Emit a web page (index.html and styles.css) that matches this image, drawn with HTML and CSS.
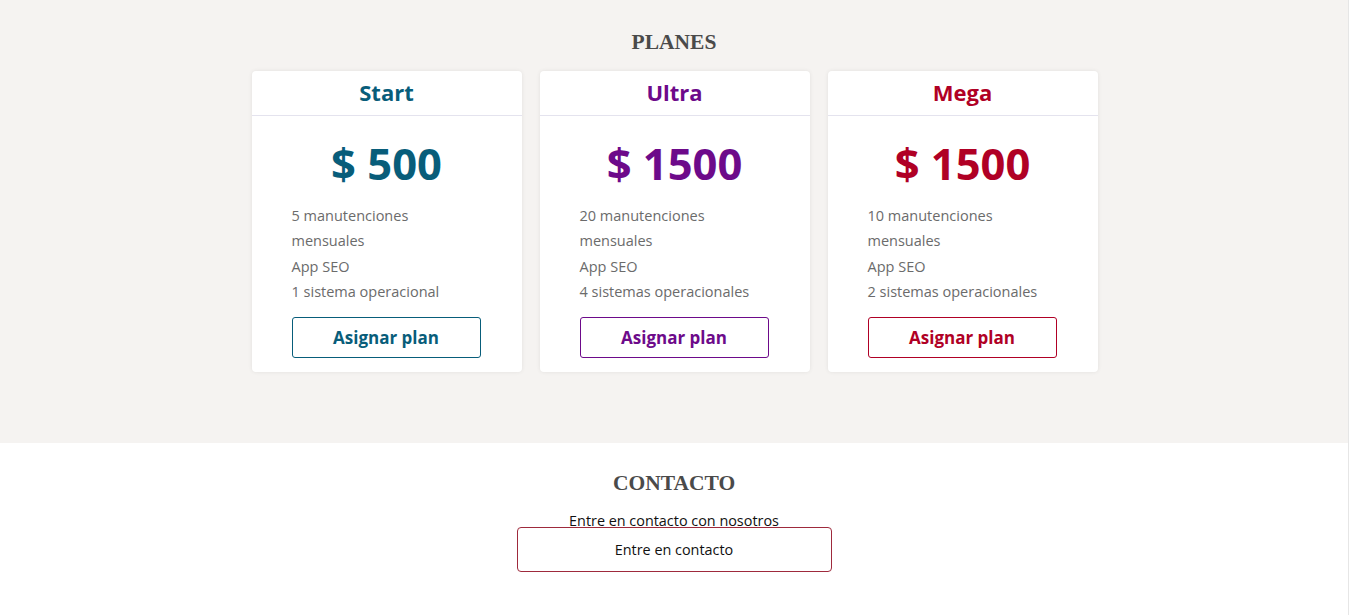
FILE: index.html
```html
<!DOCTYPE html>
<html lang="es">
<head>
<meta charset="utf-8">
<title>Planes</title>
<link rel="stylesheet" href="styles.css">
</head>
<body>
<section class="plans">
  <h2 class="section-title">PLANES</h2>
  <div class="cards">
    <div class="card start">
      <div class="card-head">Start</div>
      <div class="card-body">
        <div class="price">$ 500</div>
        <ul class="features">
          <li>5 manutenciones mensuales</li>
          <li>App SEO</li>
          <li>1 sistema operacional</li>
        </ul>
        <button class="btn">Asignar plan</button>
      </div>
    </div>
    <div class="card ultra">
      <div class="card-head">Ultra</div>
      <div class="card-body">
        <div class="price">$ 1500</div>
        <ul class="features">
          <li>20 manutenciones mensuales</li>
          <li>App SEO</li>
          <li>4 sistemas operacionales</li>
        </ul>
        <button class="btn">Asignar plan</button>
      </div>
    </div>
    <div class="card mega">
      <div class="card-head">Mega</div>
      <div class="card-body">
        <div class="price">$ 1500</div>
        <ul class="features">
          <li>10 manutenciones mensuales</li>
          <li>App SEO</li>
          <li>2 sistemas operacionales</li>
        </ul>
        <button class="btn">Asignar plan</button>
      </div>
    </div>
  </div>
</section>
<section class="contact">
  <h2 class="section-title">CONTACTO</h2>
  <p class="contact-text">Entre en contacto con nosotros</p>
  <button class="contact-btn">Entre en contacto</button>
</section>
</body>
</html>
```
FILE: styles.css
```css
* { box-sizing: border-box; }
html, body { margin: 0; padding: 0; }
body {
  font-family: "Open Sans", "Liberation Sans", sans-serif;
  background: #ffffff;
  width: 1349px;
  border-right: 1px solid #e6e6e6;
  min-height: 615px;
}
.section-title {
  font-family: "Liberation Serif", "Times New Roman", serif;
  font-weight: bold;
  font-size: 21.5px;
  line-height: 26px;
  color: #4a4a4a;
  margin: 0;
  text-align: center;
}
.plans {
  background: #f5f3f1;
  height: 443px;
  padding-top: 29px;
}
.cards {
  display: flex;
  justify-content: center;
  gap: 18px;
  margin-top: 16px;
  padding-left: 1px;
}
.card {
  width: 270px;
  background: #fff;
  border-radius: 4px;
  box-shadow: 0 0 4px rgba(0,0,0,0.08);
}
.card-head {
  height: 45px;
  border-bottom: 1px solid #e4e3ee;
  text-align: center;
  font-weight: bold;
  font-size: 22px;
  line-height: 42px;
}
.card-body {
  padding: 20px 40px 14px;
}
.price {
  text-align: center;
  font-weight: bold;
  font-size: 43.5px;
  line-height: 56px;
}
.features {
  list-style: none;
  margin: 11px 0 0;
  padding: 0;
  color: #6b6b6b;
  font-size: 14.5px;
  line-height: 25.3px;
}
.btn {
  display: block;
  width: 189px;
  height: 41px;
  margin-top: 13px;
  background: #fff;
  color: inherit;
  border: 1px solid currentColor;
  border-radius: 3px;
  font-family: "Open Sans", "Liberation Sans", sans-serif;
  font-weight: bold;
  font-size: 17px;
  cursor: pointer;
}
.start { color: #085d7a; }
.ultra { color: #6d0a8a; }
.mega { color: #b00025; }
.contact {
  padding-top: 27px;
  text-align: center;
}
.contact-text {
  margin: 15px 0 0;
  font-size: 14.4px;
  line-height: 19px;
  color: #111;
}
.contact-btn {
  display: block;
  margin: -3px auto 0;
  width: 315px;
  height: 45px;
  background: #fff;
  border: 1px solid #9e2a3c;
  border-radius: 4px;
  font-family: "Open Sans", "Liberation Sans", sans-serif;
  font-size: 14.4px;
  color: #111;
}
```
